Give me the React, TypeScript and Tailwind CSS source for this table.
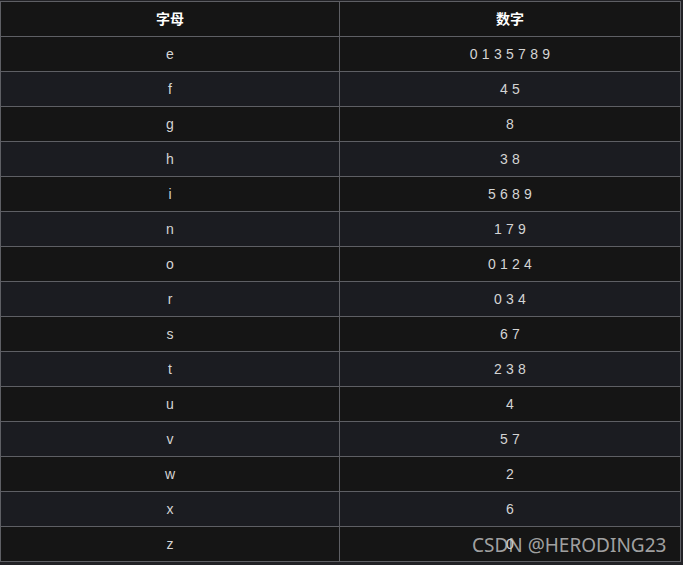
import React from "react";

const rows: [string, string][] = [
  ["e", "0 1 3 5 7 8 9"],
  ["f", "4 5"],
  ["g", "8"],
  ["h", "3 8"],
  ["i", "5 6 8 9"],
  ["n", "1 7 9"],
  ["o", "0 1 2 4"],
  ["r", "0 3 4"],
  ["s", "6 7"],
  ["t", "2 3 8"],
  ["u", "4"],
  ["v", "5 7"],
  ["w", "2"],
  ["x", "6"],
  ["z", "0"],
];

export default function App() {
  return (
    <div className="w-[683px] h-[565px] bg-[#222226] pt-[1px] relative overflow-hidden" style={{ fontFamily: '"Liberation Sans", Arial, "Noto Sans CJK SC", sans-serif' }}>
      <div className="w-[681px] border border-[#5e5f64] text-[14px]">
        <div className="grid grid-cols-[339px_1fr] h-[34px] bg-[#151515] text-white font-bold">
          <div className="flex items-center justify-center border-r border-[#5e5f64]">字母</div>
          <div className="flex items-center justify-center">数字</div>
        </div>
        {rows.map(([l, d], i) => (
          <div
            key={l}
            className={`grid grid-cols-[339px_1fr] h-[35px] border-t border-[#5e5f64] text-[#d4d4d4] ${i % 2 === 0 ? "bg-[#151515]" : "bg-[#1b1c21]"}`}
          >
            <div className="flex items-center justify-center border-r border-[#5e5f64]">{l}</div>
            <div className="flex items-center justify-center whitespace-pre tracking-[0.2px]">{d}</div>
          </div>
        ))}
      </div>
      <div
        className="absolute left-[472px] top-[531px] text-[19px] text-[#c8c8c8]/80 whitespace-nowrap"
        style={{ fontFamily: '"Noto Sans", "Open Sans", sans-serif' }}
      >
        CSDN @HERODING23
      </div>
    </div>
  );
}
